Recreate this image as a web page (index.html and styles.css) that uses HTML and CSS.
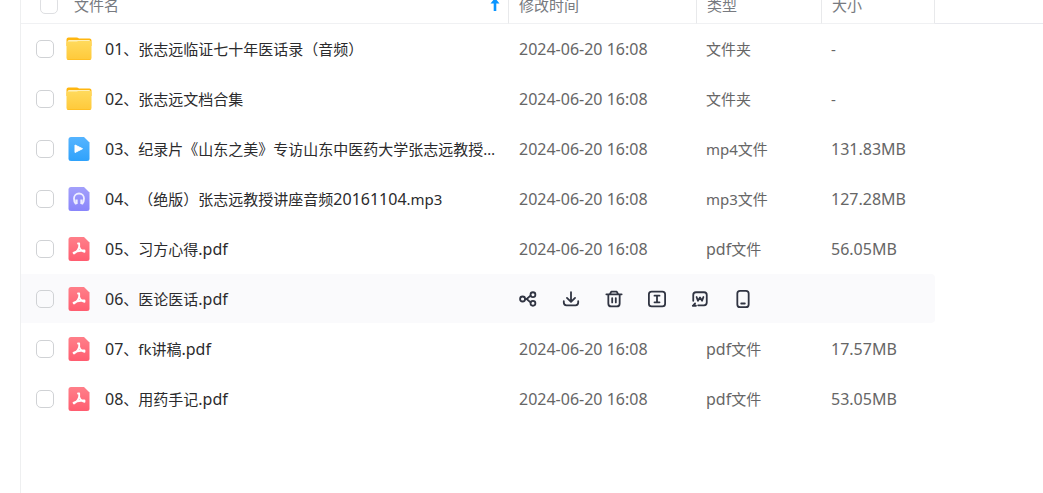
FILE: index.html
```html
<!DOCTYPE html>
<html lang="zh-CN">
<head>
<meta charset="utf-8">
<title>文件列表</title>
<link rel="stylesheet" href="styles.css">
</head>
<body>
<svg class="defs" aria-hidden="true">
  <defs>
    <linearGradient id="g-folder" x1="0" y1="0" x2="0" y2="1"><stop offset="0" stop-color="#ffda5c"/><stop offset="1" stop-color="#ffc93a"/></linearGradient>
    <linearGradient id="g-video" x1="0" y1="0" x2="0" y2="1"><stop offset="0" stop-color="#55b4ff"/><stop offset="1" stop-color="#2fa2fb"/></linearGradient>
    <linearGradient id="g-audio" x1="0" y1="0" x2="0" y2="1"><stop offset="0" stop-color="#a3a0fb"/><stop offset="1" stop-color="#8985fb"/></linearGradient>
    <linearGradient id="g-pdf" x1="0" y1="0" x2="0" y2="1"><stop offset="0" stop-color="#ff7f89"/><stop offset="1" stop-color="#ff5d70"/></linearGradient>
    <symbol id="folder" viewBox="0 0 26 26">
      <path fill="#ffb60f" d="M0.5 3.5Q0.5 1.5 2.5 1.5H10.5Q12 1.5 13 2.5H23.5Q25.5 2.5 25.5 4.5V10H0.5Z"/>
      <rect x="1.5" y="4" width="23" height="6" rx="1.5" fill="#fff0b8"/>
      <path fill="url(#g-folder)" d="M0.5 7Q0.5 5.5 2.5 5.5H10Q11 5.5 12 5H23.5Q25.5 5 25.5 7V22Q25.5 24 23.5 24H2.5Q0.5 24 0.5 22Z"/>
      <path stroke="#ffbf24" stroke-width="1" fill="none" d="M1.5 23.5H24.5"/>
    </symbol>
    <symbol id="video" viewBox="0 0 26 26">
      <path fill="url(#g-video)" d="M5 1H18L23.5 6.5V22.5Q23.5 25 21 25H5Q2.500 25 2.500 22.500V3.500Q2.500 1 5 1Z"/>
      <path fill="#fff" stroke="#fff" stroke-linejoin="round" d="M9 9L16.500 12.700L9 16.500Z"/>
    </symbol>
    <symbol id="audio" viewBox="0 0 26 26">
      <path fill="url(#g-audio)" d="M5 1H18L23.5 6.5V22.5Q23.5 25 21 25H5Q2.500 25 2.500 22.500V3.500Q2.500 1 5 1Z"/>
      <path fill="none" stroke="#eeedff" stroke-width="1.800" d="M10.500 17.500H9.500Q8 15.500 8 12.500A5 5 0 0 1 18 12.500Q18 15.500 16.500 17.500H15.500"/>
      <path stroke="#eeedff" stroke-width="2.300" d="M10.500 13.500V18M15.500 13.500V18"/>
    </symbol>
    <symbol id="pdf" viewBox="0 0 26 26">
      <path fill="url(#g-pdf)" d="M5 1H18L23.5 6.5V22.5Q23.5 25 21 25H5Q2.500 25 2.500 22.500V3.500Q2.500 1 5 1Z"/>
      <path fill="none" stroke="#fff" stroke-width="1.800" stroke-linecap="round" stroke-linejoin="round" d="M12 7.500H13.200V10.500Q12.500 14.500 8 17.500L7.500 16.800Q10.500 15 16.500 14.500H18.500V15.800Q14.500 15 13 10.500"/>
    </symbol>
  </defs>
</svg>
<main class="files">
  <table class="list">
    <colgroup><col class="c-name"><col class="c-date"><col class="c-type"><col class="c-size"><col class="c-rest"></colgroup>
    <thead>
      <tr>
        <th><div class="head-name"><input class="check" type="checkbox" aria-label="全选"><span class="title">文件名</span>
          <svg class="sort" viewBox="0 0 10 14"><path fill="#0a95ff" d="M5 0L9.500 5.500H6.300V13H3.700V5.500H0.500Z"/></svg></div></th>
        <th>修改时间</th><th>类型</th><th>大小</th><td class="rest"></td>
      </tr>
    </thead>
    <tbody>
      <tr>
        <td><div class="file"><input class="check" type="checkbox" id="f1"><svg class="icon"><use href="#folder"/></svg><label class="name" for="f1"><span class="latin">01</span>、张志远临证七十年医话录（音频）</label></div></td>
        <td class="latin">2024-06-20 16:08</td><td>文件夹</td><td>-</td><td class="rest"></td>
      </tr>
      <tr>
        <td><div class="file"><input class="check" type="checkbox" id="f2"><svg class="icon"><use href="#folder"/></svg><label class="name" for="f2"><span class="latin">02</span>、张志远文档合集</label></div></td>
        <td class="latin">2024-06-20 16:08</td><td>文件夹</td><td>-</td><td class="rest"></td>
      </tr>
      <tr>
        <td><div class="file"><input class="check" type="checkbox" id="f3"><svg class="icon"><use href="#video"/></svg><label class="name" for="f3"><span class="latin">03</span>、纪录片《山东之美》专访山东中医药大学张志远教授.mp4</label></div></td>
        <td class="latin">2024-06-20 16:08</td><td>mp4文件</td><td class="latin">131.83MB</td><td class="rest"></td>
      </tr>
      <tr>
        <td><div class="file"><input class="check" type="checkbox" id="f4"><svg class="icon"><use href="#audio"/></svg><label class="name" for="f4"><span class="latin">04</span>、（绝版）张志远教授讲座音频<span class="latin">20161104</span>.mp3</label></div></td>
        <td class="latin">2024-06-20 16:08</td><td>mp3文件</td><td class="latin">127.28MB</td><td class="rest"></td>
      </tr>
      <tr>
        <td><div class="file"><input class="check" type="checkbox" id="f5"><svg class="icon"><use href="#pdf"/></svg><label class="name" for="f5"><span class="latin">05</span>、习方心得<span class="latin">.pdf</span></label></div></td>
        <td class="latin">2024-06-20 16:08</td><td><span class="latin">pdf</span>文件</td><td class="latin">56.05MB</td><td class="rest"></td>
      </tr>
      <tr class="active">
        <td><div class="file"><input class="check" type="checkbox" id="f6"><svg class="icon"><use href="#pdf"/></svg><label class="name" for="f6"><span class="latin">06</span>、医论医话<span class="latin">.pdf</span></label></div></td>
        <td colspan="3">
          <div class="actions">
            <button type="button" aria-label="分享"><svg viewBox="0 0 20 20"><circle cx="4" cy="10" r="2.800"/><circle cx="15.500" cy="5.200" r="2.700"/><circle cx="15.500" cy="14.800" r="2.700"/><path d="M6.800 10H8.500L12.800 6.200M8.500 10L12.800 13.800"/></svg></button>
            <button type="button" aria-label="下载"><svg viewBox="0 0 20 20"><path d="M10 2.500V13M5.500 8.800L10 13.200L14.500 8.800M2 12.500V14Q2 17 5 17H15Q18 17 18 14V12.500"/></svg></button>
            <button type="button" aria-label="删除"><svg viewBox="0 0 20 20"><path d="M1.500 4.800H18.500M5.500 4.500L7 1.800H13L14.500 4.500M3.700 5V15Q3.700 18.300 7 18.300H13Q16.300 18.300 16.300 15V5M8 9V13.800M12 9V13.800"/></svg></button>
            <button type="button" aria-label="重命名"><svg viewBox="0 0 20 20"><rect x="1" y="1.800" width="18" height="16.400" rx="3"/><path d="M7.200 6.300H12.800M10 6.300V13.700M7.200 13.700H12.800"/></svg></button>
            <button type="button" aria-label="转为Word"><svg viewBox="0 0 20 20"><path d="M2.500 12V5.500Q2.500 2.500 5.500 2.500H14.500Q17.500 2.500 17.500 5.500V14Q17.500 17 14.500 17H8M6.200 7.800L7.700 12L10 8.300L12.300 12L13.800 7.800"/><path d="M2 17.500H5.500M4.500 15L2.500 17"/></svg></button>
            <button type="button" aria-label="发送到手机"><svg viewBox="0 0 20 20"><rect x="3.700" y="1" width="12.600" height="18" rx="3"/><path d="M8 15H12"/></svg></button>
          </div>
        </td><td class="rest"></td>
      </tr>
      <tr>
        <td><div class="file"><input class="check" type="checkbox" id="f7"><svg class="icon"><use href="#pdf"/></svg><label class="name" for="f7"><span class="latin">07</span>、fk讲稿<span class="latin">.pdf</span></label></div></td>
        <td class="latin">2024-06-20 16:08</td><td><span class="latin">pdf</span>文件</td><td class="latin">17.57MB</td><td class="rest"></td>
      </tr>
      <tr>
        <td><div class="file"><input class="check" type="checkbox" id="f8"><svg class="icon"><use href="#pdf"/></svg><label class="name" for="f8"><span class="latin">08</span>、用药手记<span class="latin">.pdf</span></label></div></td>
        <td class="latin">2024-06-20 16:08</td><td><span class="latin">pdf</span>文件</td><td class="latin">53.05MB</td><td class="rest"></td>
      </tr>
    </tbody>
  </table>
</main>
</body>
</html>
```
FILE: styles.css
```css
* { box-sizing: border-box; }

html { overflow: hidden; }

body {
  margin: 0;
  background: #fff;
  color: #666;
  font: 15px/20px "Noto Sans", "Noto Sans CJK SC", sans-serif;
  text-spacing-trim: space-all;
}

.defs {
  position: absolute;
  width: 0;
  height: 0;
}

/* The list is scrolled slightly past the top of its header. */
.files {
  margin: -14px 0 0 20px;
  min-height: calc(100vh + 14px);
  border-left: 1px solid #eeeff0;
}

.list {
  width: 100%;
  table-layout: fixed;
  border-collapse: separate;
  border-spacing: 0;
}

.c-date { width: 188px; }
.c-type { width: 125px; }
.c-size { width: 113px; }
.c-rest { width: 108px; }

th, td {
  padding: 0 0 0 10px;
  text-align: left;
  font-weight: 400;
  white-space: nowrap;
}

th {
  height: 38px;
  border-right: 1px solid #e8e9eb;
  border-bottom: 1px solid #f0f1f3;
  color: #777a80;
}

thead .rest { border-bottom: 1px solid #e8e9ee; }

tbody td {
  height: 50px;
  border-bottom: 1px solid #fff;
}

tbody td:nth-child(3),
tbody td:nth-child(4) { padding-left: 9px; }

.latin { font-size: 16px; }

.head-name, .file {
  display: flex;
  align-items: center;
}

th:first-child { padding-left: 19px; }
tbody td:first-child { padding-left: 15px; }

.title {
  flex: 1;
  padding-left: 16px;
}

.sort {
  width: 10px;
  height: 14px;
  margin-right: 8px;
}

.check {
  appearance: none;
  flex: none;
  width: 18px;
  height: 18px;
  margin: 0;
  border: 1px solid #d0d2d5;
  border-radius: 5px;
  background: transparent;
}

th .check { border-color: #dedfe2; }
.check:checked { background: #0a95ff; }

.icon {
  flex: none;
  width: 26px;
  height: 26px;
  margin: 0 13px 0 12px;
}

.name {
  flex: 1;
  min-width: 0;
  margin-right: 11px;
  overflow: hidden;
  text-overflow: ellipsis;
  color: #2b2b2d;
}

.active td:not(.rest) {
  background: #fafafc;
  background-clip: padding-box;
}

.active td:nth-child(2) { border-radius: 0 4px 4px 0; }

.actions {
  display: flex;
  gap: 25px;
}

.actions button {
  display: block;
  width: 18px;
  height: 18px;
  padding: 0;
  border: 0;
  background: none;
  color: #303442;
}

.actions svg {
  display: block;
  width: 18px;
  height: 18px;
  fill: none;
  stroke: currentColor;
  stroke-width: 2;
  stroke-linecap: round;
  stroke-linejoin: round;
}
```
